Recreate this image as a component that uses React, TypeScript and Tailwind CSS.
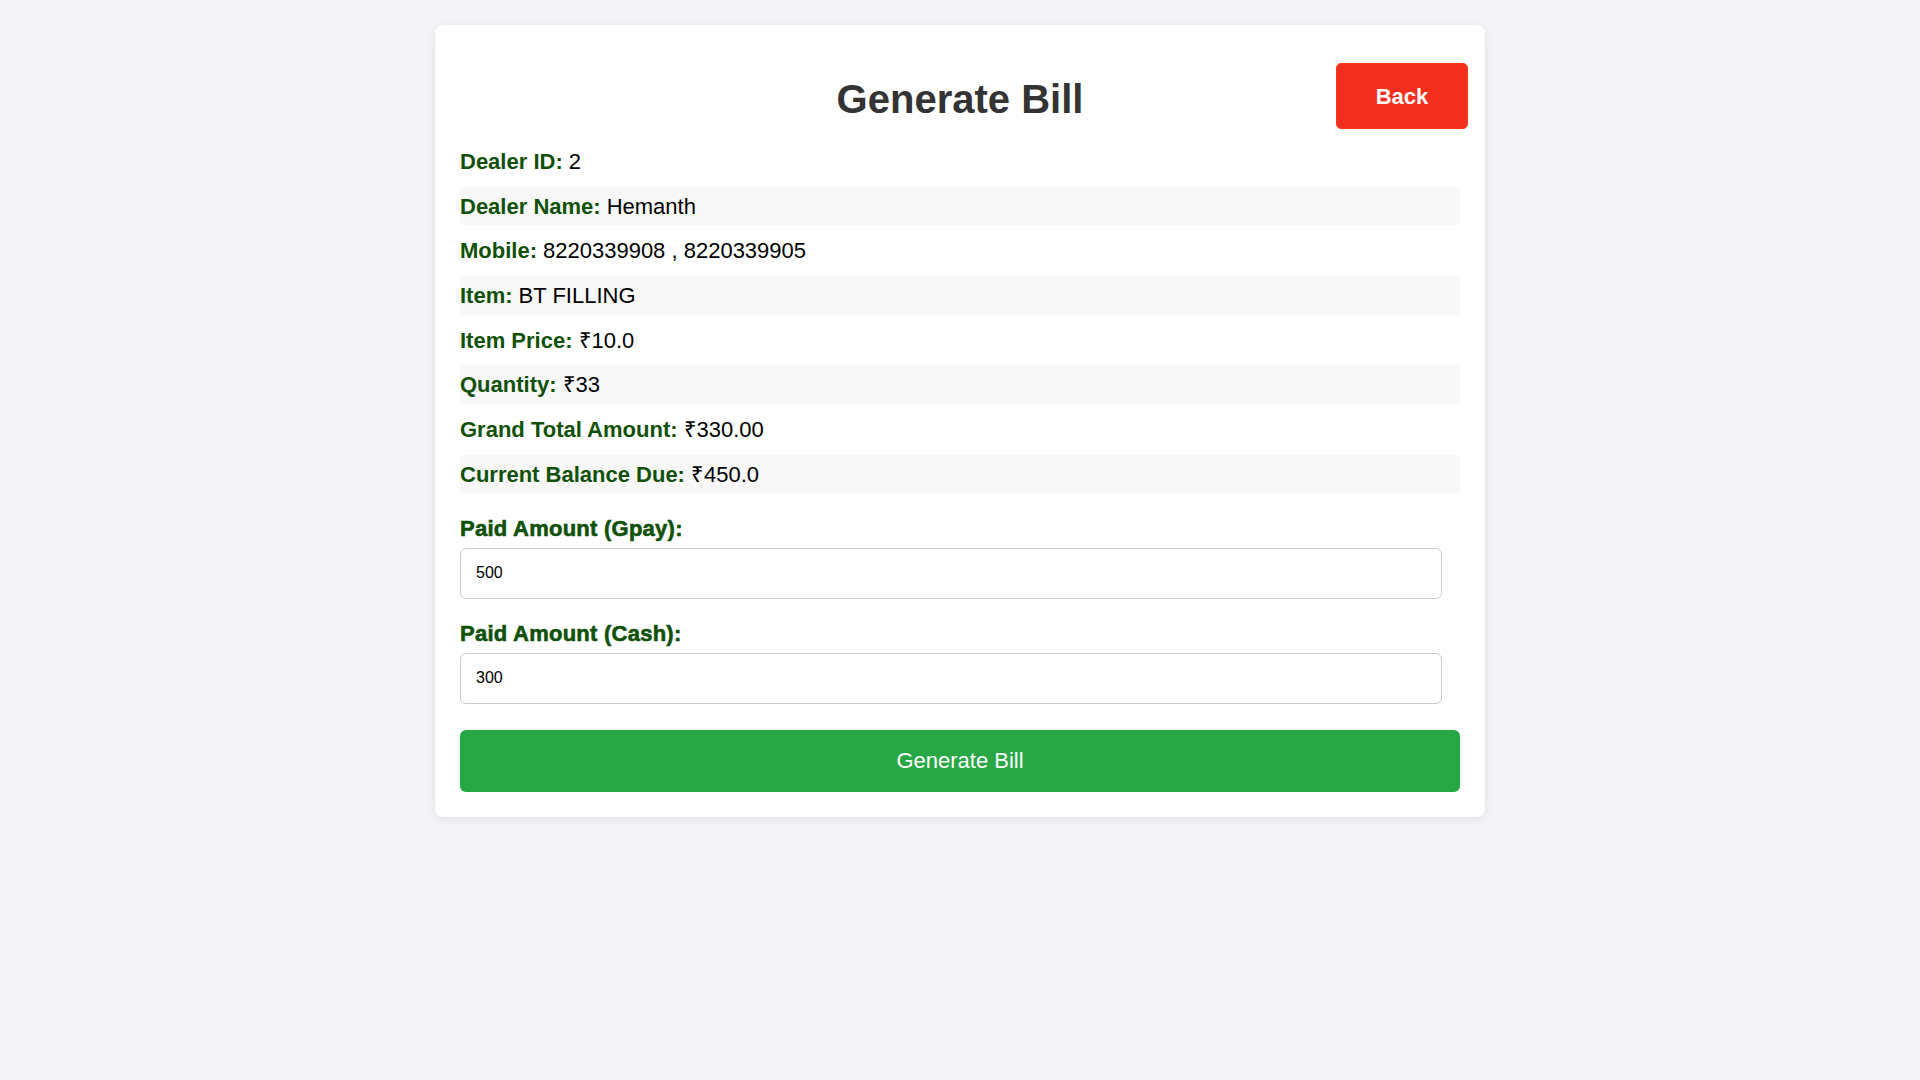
const details = [
  { label: "Dealer ID:", value: "2" },
  { label: "Dealer Name:", value: "Hemanth" },
  { label: "Mobile:", value: "8220339908 , 8220339905" },
  { label: "Item:", value: "BT FILLING" },
  { label: "Item Price:", value: "₹10.0" },
  { label: "Quantity:", value: "₹33" },
  { label: "Grand Total Amount:", value: "₹330.00" },
  { label: "Current Balance Due:", value: "₹450.0" },
];

const payments = [
  { label: "Paid Amount (Gpay):", value: "500" },
  { label: "Paid Amount (Cash):", value: "300" },
];

export default function App() {
  return (
    <div className="min-h-screen bg-[#f4f4f8] pt-[25px] font-['Liberation_Sans',Arial,sans-serif]">
      <div className="mx-auto w-[1050px] rounded-[8px] bg-white p-[25px] shadow-[0_2px_10px_rgba(0,0,0,0.08)]">
        <div className="grid grid-cols-[1fr_auto_1fr] items-start">
          <div />
          <h1 className="mt-[27px] text-[40px] leading-[45px] font-bold text-[#333]">Generate Bill</h1>
          <div className="flex justify-end">
            <button className="mt-[13px] -mr-[8px] h-[66px] w-[132px] rounded-[5px] border border-[#ff3d10] bg-[#f22e1e] text-[22px] font-bold text-white">
              Back
            </button>
          </div>
        </div>

        <div className="mt-[13px] flex flex-col gap-[6px]">
          {details.map((d, i) => (
            <div
              key={d.label}
              className={`flex h-[38.7px] items-center rounded-[4px] text-[22px] leading-[25px] ${
                i % 2 === 1 ? "bg-[#f8f8f8]" : ""
              }`}
            >
              <span className="font-bold text-[#105008]">{d.label}</span>
              <span className="ml-[6px] text-black">{d.value}</span>
            </div>
          ))}
        </div>

        {payments.map((p) => (
          <div key={p.label} className="mt-[22px] flex flex-col gap-[7px]">
            <label className="text-[22px] leading-[25px] font-bold tracking-[0.25px] text-[#105008] [-webkit-text-stroke:0.6px_#105008]">
              {p.label}
            </label>
            <input
              readOnly
              value={p.value}
              className="h-[51px] w-[982px] rounded-[6px] border border-[#ccc] bg-white pl-[15px] text-[16px] text-black outline-none"
            />
          </div>
        ))}

        <button className="mt-[26px] h-[62px] w-full rounded-[6px] bg-[#28a745] text-[22px] text-white">
          Generate Bill
        </button>
      </div>
    </div>
  );
}
